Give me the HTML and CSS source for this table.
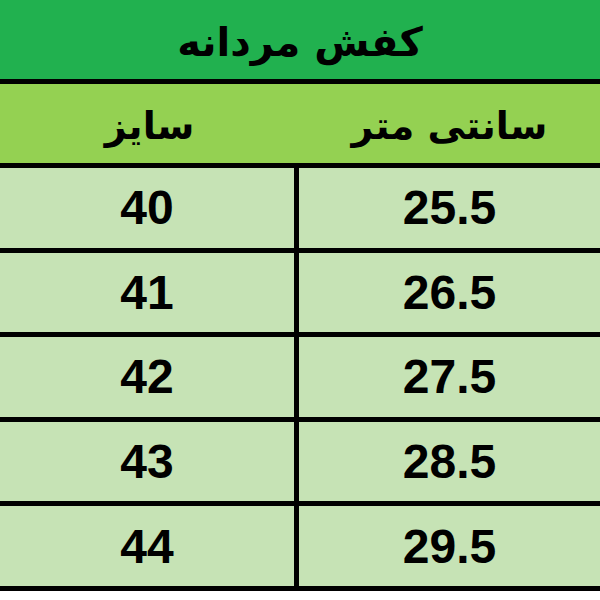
FILE: index.html
```html
<!DOCTYPE html>
<html lang="fa" dir="rtl">
<head>
<meta charset="utf-8">
<link rel="stylesheet" href="styles.css">
</head>
<body>
<div class="table">
  <div class="title">کفش مردانه</div>
  <div class="head">
    <div class="hcell">سانتی متر</div>
    <div class="hcell">سایز</div>
  </div>
  <div class="rows">
    <div class="cell num">25.5</div><div class="cell num">40</div>
    <div class="cell num">26.5</div><div class="cell num">41</div>
    <div class="cell num">27.5</div><div class="cell num">42</div>
    <div class="cell num">28.5</div><div class="cell num">43</div>
    <div class="cell num">29.5</div><div class="cell num">44</div>
  </div>
</div>
</body>
</html>
```
FILE: styles.css
```css
html, body {
  margin: 0;
  padding: 0;
  background: #ffffff;
}
body {
  width: 600px;
  height: 600px;
  overflow: hidden;
}
.table {
  display: flex;
  flex-direction: column;
  width: 600px;
  background: #000;
  gap: 5px;
  padding-bottom: 5px;
}
.title {
  height: 79px;
  background: #21b14f;
  display: flex;
  align-items: center;
  justify-content: center;
  padding-top: 4px;
  box-sizing: border-box;
  font-family: "DejaVu Sans", sans-serif;
  font-weight: bold;
  font-size: 40px;
  color: #000;
}
.head {
  height: 79px;
  background: #94d152;
  display: grid;
  grid-template-columns: 301px 299px;
  align-items: center;
}
.hcell {
  text-align: center;
  font-family: "DejaVu Sans", sans-serif;
  font-weight: bold;
  font-size: 38px;
  color: #000;
  padding-top: 4px;
}
.rows {
  display: grid;
  grid-template-columns: 301px 294px;
  grid-auto-rows: 79.6px;
  column-gap: 5px;
  row-gap: 5px;
}
.cell {
  background: #c6e3b5;
  display: flex;
  align-items: center;
  justify-content: center;
}
.num {
  font-family: "Liberation Sans", Arial, sans-serif;
  font-weight: bold;
  font-size: 48px;
  color: #000;
  direction: ltr;
}
```
